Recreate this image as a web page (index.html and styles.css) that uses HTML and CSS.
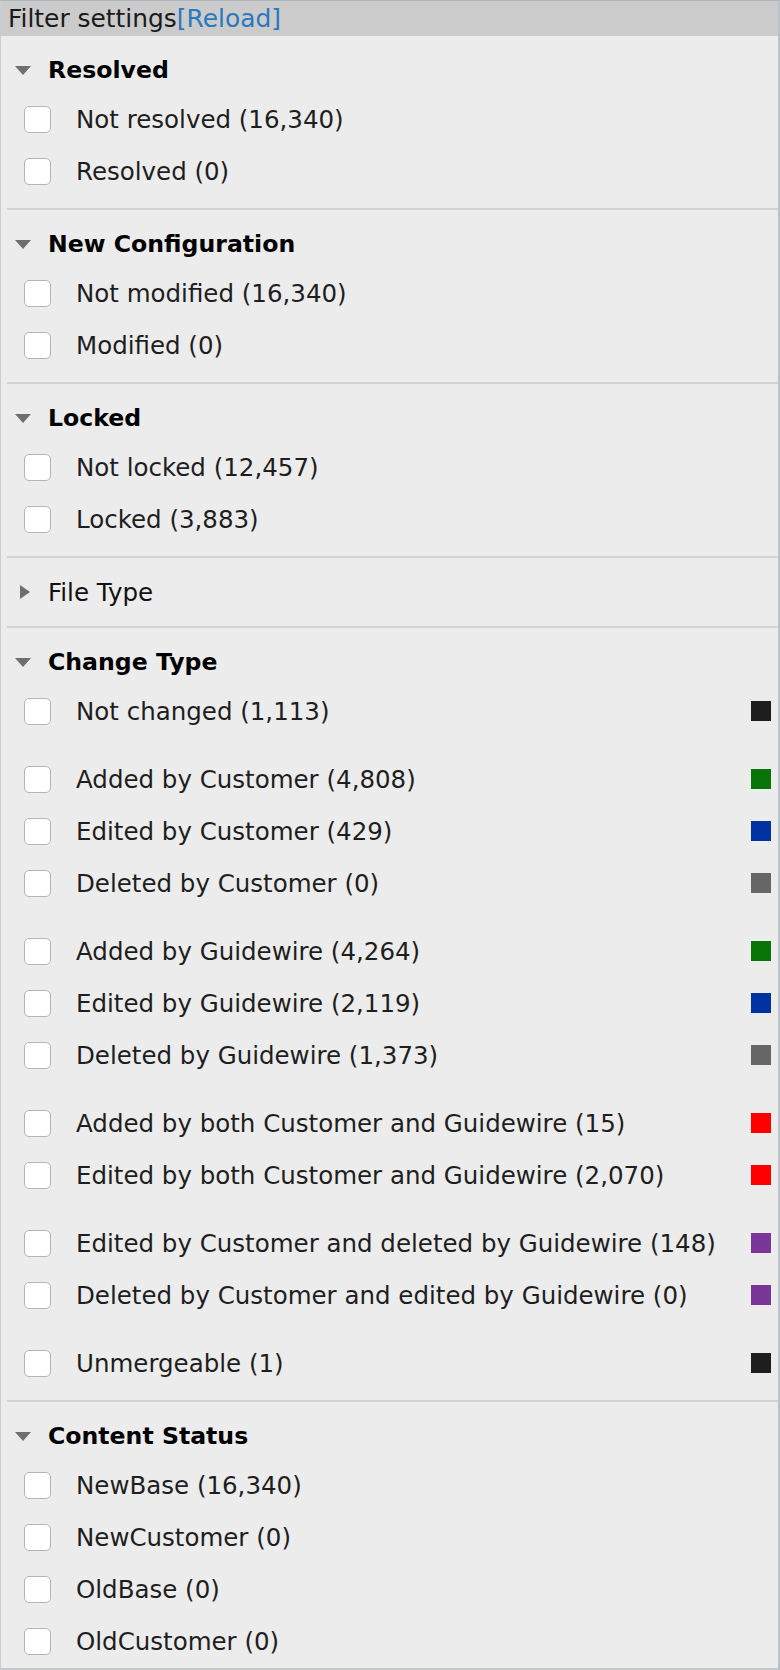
FILE: index.html
```html
<!DOCTYPE html>
<html>
<head>
<meta charset="utf-8">
<link rel="stylesheet" href="styles.css">
</head>
<body>
<div class="panel">
  <div class="header">Filter settings<span class="reload">[Reload]</span></div>

  <section class="section">
    <div class="heading"><span class="tri open"></span>Resolved</div>
    <div class="row"><span class="cb"></span><span class="label">Not resolved (16,340)</span></div>
    <div class="row"><span class="cb"></span><span class="label">Resolved (0)</span></div>
  </section>

  <section class="section">
    <div class="heading"><span class="tri open"></span>New Configuration</div>
    <div class="row"><span class="cb"></span><span class="label">Not modified (16,340)</span></div>
    <div class="row"><span class="cb"></span><span class="label">Modified (0)</span></div>
  </section>

  <section class="section">
    <div class="heading"><span class="tri open"></span>Locked</div>
    <div class="row"><span class="cb"></span><span class="label">Not locked (12,457)</span></div>
    <div class="row"><span class="cb"></span><span class="label">Locked (3,883)</span></div>
  </section>

  <section class="section collapsed">
    <div class="heading plain"><span class="tri closed"></span>File Type</div>
  </section>

  <section class="section">
    <div class="heading"><span class="tri open"></span>Change Type</div>
    <div class="group">
      <div class="row"><span class="cb"></span><span class="label">Not changed (1,113)</span><span class="sw black"></span></div>
    </div>
    <div class="group">
      <div class="row"><span class="cb"></span><span class="label">Added by Customer (4,808)</span><span class="sw green"></span></div>
      <div class="row"><span class="cb"></span><span class="label">Edited by Customer (429)</span><span class="sw blue"></span></div>
      <div class="row"><span class="cb"></span><span class="label">Deleted by Customer (0)</span><span class="sw gray"></span></div>
    </div>
    <div class="group">
      <div class="row"><span class="cb"></span><span class="label">Added by Guidewire (4,264)</span><span class="sw green"></span></div>
      <div class="row"><span class="cb"></span><span class="label">Edited by Guidewire (2,119)</span><span class="sw blue"></span></div>
      <div class="row"><span class="cb"></span><span class="label">Deleted by Guidewire (1,373)</span><span class="sw gray"></span></div>
    </div>
    <div class="group">
      <div class="row"><span class="cb"></span><span class="label">Added by both Customer and Guidewire (15)</span><span class="sw red"></span></div>
      <div class="row"><span class="cb"></span><span class="label">Edited by both Customer and Guidewire (2,070)</span><span class="sw red"></span></div>
    </div>
    <div class="group">
      <div class="row"><span class="cb"></span><span class="label">Edited by Customer and deleted by Guidewire (148)</span><span class="sw purple"></span></div>
      <div class="row"><span class="cb"></span><span class="label">Deleted by Customer and edited by Guidewire (0)</span><span class="sw purple"></span></div>
    </div>
    <div class="group">
      <div class="row"><span class="cb"></span><span class="label">Unmergeable (1)</span><span class="sw black"></span></div>
    </div>
  </section>

  <section class="section last">
    <div class="heading"><span class="tri open"></span>Content Status</div>
    <div class="row"><span class="cb"></span><span class="label">NewBase (16,340)</span></div>
    <div class="row"><span class="cb"></span><span class="label">NewCustomer (0)</span></div>
    <div class="row"><span class="cb"></span><span class="label">OldBase (0)</span></div>
    <div class="row"><span class="cb"></span><span class="label">OldCustomer (0)</span></div>
  </section>
</div>
</body>
</html>
```

FILE: styles.css
```css
html, body {
  margin: 0;
  padding: 0;
  background: #ececec;
}

.panel {
  box-sizing: border-box;
  width: 780px;
  height: 1670px;
  background: #ececec;
  border-top: 1px solid #a9b4bf;
  border-left: 1px solid #c5cdd5;
  border-right: 2px solid #bac3cc;
  border-bottom: 2px solid #c2c8ce;
  font-family: "DejaVu Sans", "Liberation Sans", sans-serif;
  color: #1e1e1e;
  overflow: hidden;
}

.header {
  height: 35px;
  background: #cbcbcb;
  font-size: 24.9px;
  line-height: 35px;
  padding-left: 7px;
  color: #1a1a1a;
  white-space: nowrap;
}

.reload {
  color: #2a78bf;
}

.section {
  margin-left: 6px;
  padding-top: 11px;
  padding-bottom: 11px;
  border-bottom: 2px solid #d2d2d2;
}

.section.last {
  border-bottom: none;
}

.heading {
  display: flex;
  align-items: center;
  height: 46px;
  font-size: 23.6px;
  font-weight: bold;
  color: #000;
  white-space: nowrap;
}

.heading.plain {
  font-weight: normal;
  font-size: 24.5px;
  color: #111;
}

.tri {
  display: inline-block;
  width: 0;
  height: 0;
  flex: none;
}

.tri.open {
  margin-left: 8px;
  margin-right: 17px;
  border-left: 8.5px solid transparent;
  border-right: 8.5px solid transparent;
  border-top: 9px solid #6f6f6f;
}

.tri.closed {
  margin-left: 13px;
  margin-right: 18px;
  border-top: 7.5px solid transparent;
  border-bottom: 7.5px solid transparent;
  border-left: 10px solid #6f6f6f;
}

.group + .group {
  margin-top: 16px;
}

.row {
  display: flex;
  align-items: center;
  height: 52px;
  font-size: 24.5px;
  white-space: nowrap;
}

.cb {
  box-sizing: border-box;
  width: 27px;
  height: 27px;
  margin-left: 17px;
  margin-right: 25px;
  background: #fff;
  border: 1px solid #b4b4b4;
  border-radius: 5px;
  flex: none;
}

.label {
  flex: 1;
}

.sw {
  width: 20px;
  height: 20px;
  margin-right: 7px;
  flex: none;
}

.sw.black { background: #1e1e1e; }
.sw.green { background: #087508; }
.sw.blue { background: #0033a1; }
.sw.gray { background: #666666; }
.sw.red { background: #ff0000; }
.sw.purple { background: #7a3799; }
```
